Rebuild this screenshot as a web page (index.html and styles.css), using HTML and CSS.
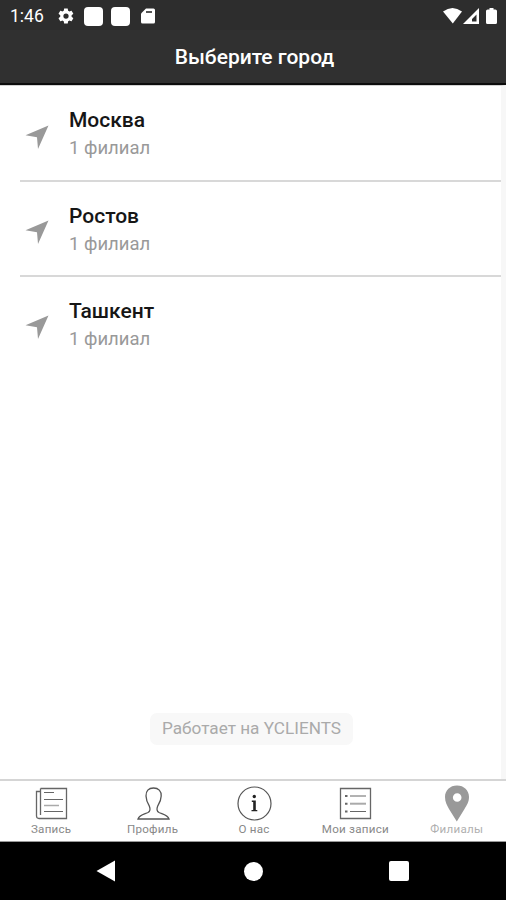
FILE: index.html
```html
<!DOCTYPE html>
<html lang="ru">
<head>
<meta charset="utf-8">
<title>Выберите город</title>
<link rel="stylesheet" href="styles.css">
</head>
<body>
<div class="phone">
  <div class="status">
    <span class="time">1:46</span>
    <svg class="gear" width="18" height="18" viewBox="0 0 24 24"><path fill="#fff" fill-rule="evenodd" d="M19.4 13c0-.3.1-.6.1-1s0-.7-.1-1l2.1-1.600c.2-.2.3-.4.1-.6l-2-3.500c-.1-.2-.4-.3-.6-.2l-2.500 1c-.5-.4-1.100-.7-1.700-1l-.4-2.600c0-.2-.2-.4-.5-.4h-4c-.2 0-.5.2-.5.4l-.4 2.600c-.6.3-1.200.6-1.700 1l-2.500-1c-.2-.1-.5 0-.6.2l-2 3.500c-.1.2-.1.500.1.600l2.100 1.600c0 .3-.1.600-.1 1s0 .7.1 1l-2.100 1.600c-.2.200-.2.400-.1.600l2 3.500c.1.200.4.300.6.200l2.500-1c.5.400 1.100.7 1.700 1l.4 2.600c0 .2.300.4.500.4h4c.3 0 .5-.2.500-.4l.4-2.600c.6-.3 1.200-.6 1.700-1l2.500 1c.2.100.5 0 .6-.2l2-3.500c.1-.2.1-.4-.1-.6zM12 15.500a3.500 3.500 0 1 1 0-7 3.500 3.500 0 0 1 0 7z"/></svg>
    <i class="square"></i>
    <i class="square"></i>
    <svg class="card" width="14" height="16" viewBox="0 0 14 16"><path fill="#fff" d="M5 .5h7.500q1.500 0 1.500 1.500v12q0 1.500-1.500 1.500h-11Q0 15.500 0 14V5.500z"/><path stroke="#555" stroke-width="2" d="M5 4h6"/></svg>
    <svg class="signals" width="56" height="18" viewBox="0 0 56 18"><path fill="#fff" d="M0 4.500Q9.500-2.500 19 4.500L9.800 16.500z"/><path fill="#fff" fill-rule="evenodd" d="M20 17 36 1v16zM29 14.500h4.500V7.500L29 12z"/><path fill="#fff" d="M46.500 1h4v1.500h1.800q1.700 0 1.700 1.500v11.500q0 1.500-1.500 1.500h-8q-1.500 0-1.500-1.500V4Q43 2.500 44.700 2.500h1.800z"/></svg>
  </div>
  <header class="header"><h1>Выберите город</h1></header>
  <main class="content">
    <ul class="cities">
      <li><svg class="arrow" width="24" height="24" viewBox="0 0 24 24"><path fill="#999" d="M23.500.5 13 24l-1-11.800L.5 10.300z"/></svg><div class="city"><b>Москва</b><span>1 филиал</span></div></li>
      <li><svg class="arrow" width="24" height="24" viewBox="0 0 24 24"><path fill="#999" d="M23.500.5 13 24l-1-11.800L.5 10.300z"/></svg><div class="city"><b>Ростов</b><span>1 филиал</span></div></li>
      <li><svg class="arrow" width="24" height="24" viewBox="0 0 24 24"><path fill="#999" d="M23.500.5 13 24l-1-11.800L.5 10.300z"/></svg><div class="city"><b>Ташкент</b><span>1 филиал</span></div></li>
    </ul>
    <div class="powered">Работает на YCLIENTS</div>
  </main>
  <nav class="tabs">
    <a><svg width="36" height="38" viewBox="0 0 36 38" fill="none" stroke="#666"><path stroke-width="1.300" d="M6.500 4.500h26v30H5q-2.500 0-2.500-2.500V7.500h4M6.500 4.500V31"/><path d="M10 8.500h10M10 15.500h19M10 27.500h19"/><path stroke="#aaa" stroke-width="1.500" d="M10 21.500h15"/></svg><span>Запись</span></a>
    <a><svg width="36" height="38" viewBox="0 0 36 38" fill="none" stroke="#555" stroke-width="1.300"><path d="M18.500 4C13.500 4 10.800 7 11 12c.2 5 1.500 7 3.300 10 1.200 3 .7 5.500-1.300 6.500-4 1.700-8.500 2-10 6.500h31c-1.500-4.500-6-4.800-10-6.500-2-1-2.500-3.500-1.300-6.500C24.500 19 26 17 26.200 12c.2-5-2.700-8-7.700-8z"/></svg><span>Профиль</span></a>
    <a><svg width="36" height="38" viewBox="0 0 36 38"><circle cx="18.500" cy="19.500" r="16.500" fill="none" stroke="#555" stroke-width="1.200"/><circle cx="18.300" cy="12.500" r="1.700" fill="#222"/><path fill="#222" d="M15.800 16.500h4V26h1.500v1.300h-5.800V26h1.700v-8h-1.400z"/></svg><span>О нас</span></a>
    <a><svg width="36" height="38" viewBox="0 0 36 38" fill="none" stroke="#666"><path stroke-width="1.300" d="M2.500 4.500h30v30h-30z"/><path d="M12 12h16M12 27.500h16"/><path stroke="#aaa" stroke-width="2" d="M12 19.700h16"/><path stroke-width="2" d="M7 12h2.500M7 19.700h2.500M7 27.500h2.500"/></svg><span>Мои записи</span></a>
    <a class="active"><svg width="36" height="38" viewBox="0 0 36 38"><path fill="#999" fill-rule="evenodd" d="M18 1.500C11 1.500 6 6.400 6 13c0 5 2 8 4 12l7.800 12.500L25.500 25c2.300-4 4.500-7 4.500-12 0-6.600-5-11.500-12-11.500zm.2 7.700a4.300 4.300 0 1 1 0 8.600 4.300 4.300 0 0 1 0-8.600z"/></svg><span>Филиалы</span></a>
  </nav>
  <div class="system">
    <svg width="20" height="24" viewBox="0 0 20 24"><path fill="#fff" d="M.5 12 19 1.500v21z"/></svg>
    <i class="home"></i>
    <i class="recent"></i>
  </div>
</div>
</body>
</html>
```

FILE: styles.css
```css
* { box-sizing: border-box; }
body { margin: 0; font-family: Roboto, "Liberation Sans", sans-serif; }
.phone { width: 506px; height: 900px; display: flex; flex-direction: column; overflow: hidden; background: #fff; }
.status { height: 30px; flex: none; display: flex; align-items: center; background: #2d2d2d; color: #fff; padding: 2px 8px 0 10px; }
.time { width: 47px; font-size: 17.5px; line-height: 20px; white-space: nowrap; }
.square { width: 19px; height: 19px; margin-right: 8px; border-radius: 4px; background: #fff; }
.gear { margin-right: 9px; }
.card { margin-left: 3px; }
.signals { margin-left: auto; margin-right: -1px; }
.header { height: 55px; flex: none; background: #303030; border-bottom: 2px solid #0c0c0c; text-align: center; color: #fff; }
.header h1 { margin: 0; padding-left: 3px; font-size: 21px; line-height: 55px; font-weight: 500; white-space: nowrap; }
.content { flex: 1; display: flex; flex-direction: column; align-items: center; border-right: 5px solid #f7f7f7; border-top: 1px solid #d2d2d2; }
.cities { align-self: stretch; list-style: none; margin: 0; padding: 0 0 0 20px; }
.cities li { display: flex; height: 95px; border-bottom: 2px solid #d8d8d8; padding: 20px 0 0 5px; }
.cities li:first-child { height: 96px; }
.cities li:last-child { border: 0; }
.arrow { margin: 18px 20px 0 0; }
.cities li:first-child .arrow { margin-top: 19px; }
.city { display: flex; flex-direction: column; white-space: nowrap; }
.city b { font-size: 21px; line-height: 29px; font-weight: 500; color: #161616; }
.city span { font-size: 18.5px; line-height: 27px; color: #999; }
.powered { width: 203px; height: 32px; margin: auto 0 34px 2px; border-radius: 7px; background: #f8f8f8; text-align: center; font-size: 17.2px; line-height: 31px; color: #aaa; white-space: nowrap; }
.tabs { height: 63px; flex: none; display: grid; grid-template-columns: repeat(5, 101.4px); padding-left: 1px; border-top: 2px solid #d5d5d5; border-bottom: 1px solid #999; }
.tabs a { display: flex; flex-direction: column; align-items: center; padding-top: 3px; }
.tabs svg { flex: none; }
.tabs span { margin: -1px 1px 0 0; font-size: 11.6px; line-height: 17px; letter-spacing: .25px; color: #888; white-space: nowrap; }
.tabs .active span { color: #b0b0b0; }
.system { height: 58px; flex: none; display: flex; align-items: center; justify-content: space-between; background: #000; padding: 0 97px 0 96px; }
.home { width: 19px; height: 19px; margin-left: 1px; border-radius: 50%; background: #fff; }
.recent { width: 20px; height: 20px; border-radius: 2px; background: #fff; }
```
